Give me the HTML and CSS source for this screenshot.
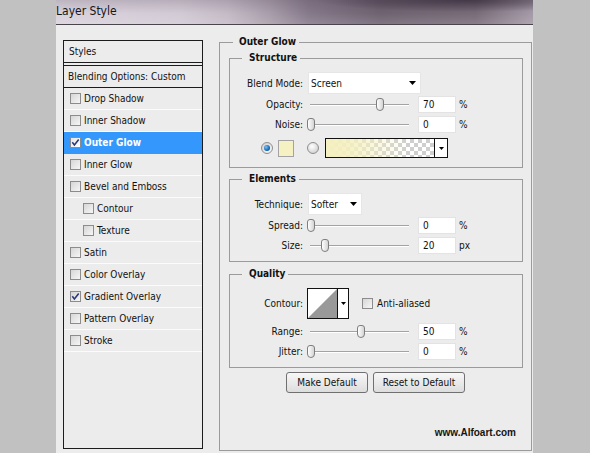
FILE: index.html
```html
<!DOCTYPE html>
<html>
<head>
<meta charset="utf-8">
<title>Layer Style</title>
<link rel="stylesheet" href="styles.css">
</head>
<body>
<div class="dialog">
  <div class="titlebar"><span class="title">Layer Style</span></div>
  <div class="body">
    <div class="list">
      <div class="list-head">Styles</div>
      <div class="list-blend">Blending Options: Custom</div>
      <div class="item"><span class="cb"></span>Drop Shadow</div>
      <div class="item"><span class="cb"></span>Inner Shadow</div>
      <div class="item active"><span class="cb"><svg class="tick" viewBox="0 0 9 9" width="9" height="9"><path d="M1.3 4.3 L3.4 6.9 L7.7 1.4" fill="none" stroke="#28397e" stroke-width="1.6"/></svg></span>Outer Glow</div>
      <div class="item"><span class="cb"></span>Inner Glow</div>
      <div class="item"><span class="cb"></span>Bevel and Emboss</div>
      <div class="item sub"><span class="cb"></span>Contour</div>
      <div class="item sub"><span class="cb"></span>Texture</div>
      <div class="item"><span class="cb"></span>Satin</div>
      <div class="item"><span class="cb"></span>Color Overlay</div>
      <div class="item"><span class="cb"><svg class="tick" viewBox="0 0 9 9" width="9" height="9"><path d="M1.3 4.3 L3.4 6.9 L7.7 1.4" fill="none" stroke="#28397e" stroke-width="1.6"/></svg></span>Gradient Overlay</div>
      <div class="item"><span class="cb"></span>Pattern Overlay</div>
      <div class="item"><span class="cb"></span>Stroke</div>
    </div>

    <div class="group outer">
      <div class="gtitle">Outer Glow</div>

      <div class="group sub-group structure">
        <div class="gtitle">Structure</div>
        <div class="row row-select first">
          <span class="lbl">Blend Mode:</span>
          <div class="select select-blend"><span>Screen</span><svg width="7" height="4" viewBox="0 0 7 4"><path d="M0 0h7L3.5 4z" fill="#000"/></svg></div>
        </div>
        <div class="row">
          <span class="lbl">Opacity:</span>
          <div class="slider"><span class="thumb" style="margin-left:70px"></span></div>
          <div class="input">70</div><span class="unit">%</span>
        </div>
        <div class="row">
          <span class="lbl">Noise:</span>
          <div class="slider"><span class="thumb" style="margin-left:1px"></span></div>
          <div class="input">0</div><span class="unit">%</span>
        </div>
        <div class="row row-color">
          <span class="radio on"><span class="dot"></span></span>
          <span class="swatch"></span>
          <span class="radio off"></span>
          <div class="gradbox"><span class="grad"></span><span class="gsep"></span><span class="garrow"><svg width="5" height="3" viewBox="0 0 5 3"><path d="M0 0h5L2.5 3z" fill="#000"/></svg></span></div>
        </div>
      </div>

      <div class="group sub-group elements">
        <div class="gtitle">Elements</div>
        <div class="row row-select first">
          <span class="lbl">Technique:</span>
          <div class="select select-tech"><span>Softer</span><svg width="7" height="4" viewBox="0 0 7 4"><path d="M0 0h7L3.5 4z" fill="#000"/></svg></div>
        </div>
        <div class="row">
          <span class="lbl">Spread:</span>
          <div class="slider"><span class="thumb" style="margin-left:1px"></span></div>
          <div class="input">0</div><span class="unit">%</span>
        </div>
        <div class="row">
          <span class="lbl">Size:</span>
          <div class="slider"><span class="thumb" style="margin-left:15px"></span></div>
          <div class="input">20</div><span class="unit">px</span>
        </div>
      </div>

      <div class="group sub-group quality">
        <div class="gtitle">Quality</div>
        <div class="row row-contour first">
          <span class="lbl">Contour:</span>
          <div class="contour">
            <svg class="curve" width="29" height="29" viewBox="0 0 29 29"><rect width="29" height="29" fill="#fff"/><path d="M0 29 L29 0 L29 29 Z" fill="#999"/></svg>
            <span class="csep"></span>
            <span class="carrow"><svg width="5" height="3" viewBox="0 0 5 3"><path d="M0 0h5L2.5 3z" fill="#000"/></svg></span>
          </div>
          <span class="cb aa"></span><span class="aa-text">Anti-aliased</span>
        </div>
        <div class="row row-range">
          <span class="lbl">Range:</span>
          <div class="slider"><span class="thumb" style="margin-left:51px"></span></div>
          <div class="input">50</div><span class="unit">%</span>
        </div>
        <div class="row">
          <span class="lbl">Jitter:</span>
          <div class="slider"><span class="thumb" style="margin-left:1px"></span></div>
          <div class="input">0</div><span class="unit">%</span>
        </div>
      </div>

      <div class="buttons">
        <button class="btn btn-make">Make Default</button>
        <button class="btn btn-reset">Reset to Default</button>
      </div>
      <div class="credit">www.Alfoart.com</div>
    </div>
  </div>
</div>
</body>
</html>
```

FILE: styles.css
```css
html, body {
  margin: 0;
  padding: 0;
}

body {
  background: #c0c1c0;
  font-family: "DejaVu Sans Condensed", "DejaVu Sans", sans-serif;
  font-stretch: condensed;
  font-size: 10px;
  color: #111;
}

.dialog {
  margin-left: 56px;
  width: 477px;
  height: 453px;
  background: #ececec;
  overflow: hidden;
}

.titlebar {
  height: 24px;
  border-bottom: 1px solid #4a444c;
  overflow: hidden;
  display: flex;
  align-items: flex-start;
  background:
    radial-gradient(ellipse 150px 12px at 410px 0px, rgba(35, 25, 40, 0.55), rgba(35, 25, 40, 0)),
    linear-gradient(to bottom, rgba(60, 45, 65, 0.18), rgba(255, 255, 255, 0) 55%, rgba(255, 255, 255, 0.12)),
    linear-gradient(to right, #d9d2dc 0%, #d2cad5 26%, #c4bac6 36%, #a79ca9 45%, #85798a 53%, #6e6270 68%, #776b78 88%, #a59aa7 100%);
}

.title {
  margin-left: 0;
  font-size: 12px;
  line-height: 22px;
  color: #161616;
}

.body {
  display: flex;
  align-items: flex-start;
  padding-left: 7px;
}

/* ---------- left list ---------- */
.list {
  box-sizing: border-box;
  width: 140px;
  height: 409px;
  margin-top: 15px;
  border: 1px solid #1c1c1c;
  background: #ececec;
}

.list-head {
  height: 21px;
  line-height: 21px;
  padding-left: 5px;
  border-bottom: 1px solid #1c1c1c;
}

.list-blend {
  height: 21px;
  line-height: 21px;
  padding-left: 4px;
  margin-top: 2px;
  border-top: 1px solid #1c1c1c;
  border-bottom: 1px solid #1c1c1c;
}

.item {
  height: 21px;
  display: flex;
  align-items: center;
  padding-left: 6px;
  border-bottom: 1px solid #fbfbfb;
}

.item.sub {
  padding-left: 19px;
}

.item.active {
  background: #3497fb;
  border-bottom-color: #3497fb;
  color: #fff;
  font-weight: bold;
}

.cb {
  box-sizing: border-box;
  width: 11px;
  height: 11px;
  flex: none;
  margin-right: 3px;
  border: 1px solid #8c8c8c;
  background: linear-gradient(135deg, #d6d6d6, #f6f6f6);
  display: flex;
  align-items: center;
  justify-content: center;
}

.item.active .cb {
  background: linear-gradient(135deg, #e4e4e4, #ffffff);
}

.tick {
  display: block;
}

/* ---------- group boxes ---------- */
.group {
  box-sizing: border-box;
  border: 1px solid #9b9b9b;
}

.outer {
  width: 313px;
  height: 409px;
  margin: 17px 0 0 16px;
}

.gtitle {
  width: fit-content;
  height: 14px;
  line-height: 14px;
  margin-top: -8px;
  background: #ececec;
  font-weight: bold;
}

.outer > .gtitle {
  margin-left: 13px;
  padding: 0 3px 0 6px;
}

.sub-group {
  margin: 9px 8px 0 9px;
}

.sub-group > .gtitle {
  margin-left: 12px;
  padding: 0 3px 0 7px;
}

.structure {
  padding-bottom: 7px;
}

.elements {
  margin-top: 11px;
  padding-bottom: 6px;
}

.quality {
  margin-top: 12px;
  padding-bottom: 6px;
}

/* ---------- rows ---------- */
.row {
  height: 20px;
  display: flex;
  align-items: center;
}

.row.first {
  margin-top: 7px;
}

.row-select {
  height: 22px;
}

.row-color {
  height: 24px;
  margin-top: 2px;
}

.row-contour {
  height: 31px;
}

.row-range {
  margin-top: 2px;
}

.lbl {
  width: 73px;
  flex: none;
  text-align: right;
}

.select {
  box-sizing: border-box;
  height: 22px;
  margin-left: 5px;
  background: #fff;
  border: 1px solid #e6e6e6;
  display: flex;
  align-items: center;
  justify-content: space-between;
  padding: 0 4px 0 2px;
}

.select svg {
  display: block;
}

.select-blend {
  width: 113px;
}

.select-tech {
  width: 54px;
}

.slider {
  width: 106px;
  height: 13px;
  margin-left: 3px;
  display: flex;
  background:
    linear-gradient(#a3a3a3, #a3a3a3) 4px 6px / 99px 1px no-repeat,
    linear-gradient(#ffffff, #ffffff) 4px 7px / 99px 1px no-repeat;
}

.thumb {
  box-sizing: border-box;
  width: 8px;
  height: 13px;
  border: 1px solid #7e7e7e;
  border-radius: 3px 3px 4px 4px;
  background: linear-gradient(to right, #ffffff, #d4d4d4);
}

.input {
  box-sizing: border-box;
  width: 38px;
  height: 17px;
  margin-left: 6px;
  padding-left: 4px;
  line-height: 15px;
  background: #fff;
  border: 1px solid #e3e3e3;
}

.unit {
  margin-left: 3px;
}

/* ---------- colour row ---------- */
.radio {
  box-sizing: border-box;
  width: 12px;
  height: 12px;
  flex: none;
  border-radius: 50%;
  border: 1px solid #8e8e8e;
  display: flex;
  align-items: center;
  justify-content: center;
}

.radio.on {
  margin-left: 31px;
  background: linear-gradient(135deg, #d0d0d0, #f8f8f8);
}

.radio.on .dot {
  width: 6px;
  height: 6px;
  border-radius: 50%;
  background: radial-gradient(circle at 35% 35%, #7ec0f2, #1668b4 60%, #0d4a86);
}

.radio.off {
  margin-left: 13px;
  background: radial-gradient(circle at 40% 35%, #ffffff, #e2e2e2 50%, #c2c2c2);
}

.swatch {
  box-sizing: border-box;
  width: 16px;
  height: 17px;
  margin-left: 5px;
  background: #f6f1c3;
  border: 1px solid #a3a3a3;
}

.gradbox {
  box-sizing: border-box;
  width: 123px;
  height: 20px;
  margin-left: 6px;
  border: 1px solid #111;
  display: flex;
}

.grad {
  width: 108px;
  background:
    linear-gradient(to right, rgba(245, 240, 192, 1) 0%, rgba(245, 240, 192, 0.85) 25%, rgba(245, 240, 192, 0) 75%),
    repeating-conic-gradient(#cfcfcf 0 25%, #ffffff 0 50%) 0 0 / 8px 8px;
}

.gsep {
  width: 1px;
  background: #111;
}

.garrow {
  flex: 1;
  background: #fff;
  display: flex;
  align-items: center;
  justify-content: center;
}

.garrow svg, .carrow svg {
  display: block;
}

/* ---------- contour ---------- */
.contour {
  box-sizing: border-box;
  width: 42px;
  height: 31px;
  margin-left: 4px;
  border: 1px solid #111;
  display: flex;
}

.curve {
  display: block;
  flex: none;
}

.csep {
  width: 1px;
  background: #111;
}

.carrow {
  flex: 1;
  background: #fff;
  display: flex;
  align-items: center;
  justify-content: center;
}

.cb.aa {
  margin-left: 13px;
  margin-right: 0;
}

.aa-text {
  margin-left: 4px;
}

/* ---------- buttons ---------- */
.buttons {
  display: flex;
  justify-content: center;
  gap: 5px;
  margin-top: 4px;
}

.btn {
  box-sizing: border-box;
  height: 21px;
  padding: 0;
  font-family: inherit;
  font-stretch: condensed;
  font-size: 10px;
  color: #111;
  background: linear-gradient(#f7f7f7, #dddddd);
  border: 1px solid #707070;
  border-radius: 3px;
}

.btn-make {
  width: 82px;
}

.btn-reset {
  width: 92px;
}

.credit {
  margin-top: 33px;
  margin-right: 15px;
  line-height: 14px;
  text-align: right;
  font-family: "Liberation Sans", Arial, sans-serif;
  font-stretch: normal;
  font-weight: bold;
  font-size: 10px;
  color: #141414;
}
```
